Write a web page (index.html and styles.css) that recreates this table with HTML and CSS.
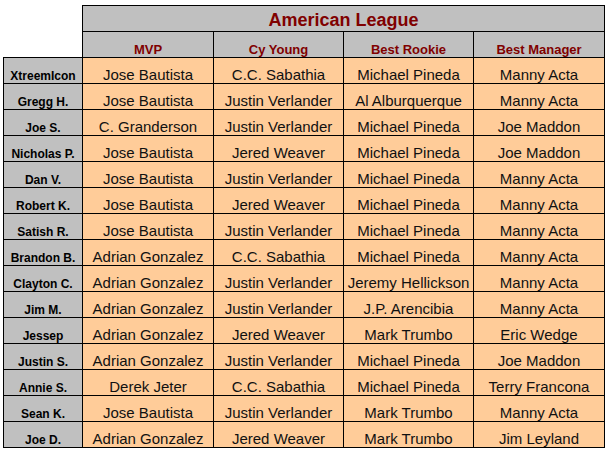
FILE: index.html
```html
<!DOCTYPE html>
<html>
<head>
<meta charset="utf-8">
<link rel="stylesheet" href="styles.css">
</head>
<body>
<table class="grid">
  <colgroup>
    <col class="c-name">
    <col class="c-mvp">
    <col class="c-cy">
    <col class="c-rookie">
    <col class="c-mgr">
  </colgroup>
  <thead>
    <tr class="row">
      <th class="corner" rowspan="2"></th>
      <th class="title" colspan="4">American League</th>
    </tr>
    <tr class="row">
      <th class="head">MVP</th>
      <th class="head">Cy Young</th>
      <th class="head">Best Rookie</th>
      <th class="head">Best Manager</th>
    </tr>
  </thead>
  <tbody>
    <tr class="row"><th class="name">XtreemIcon</th><td>Jose Bautista</td><td>C.C. Sabathia</td><td>Michael Pineda</td><td>Manny Acta</td></tr>
    <tr class="row"><th class="name">Gregg H.</th><td>Jose Bautista</td><td>Justin Verlander</td><td>Al Alburquerque</td><td>Manny Acta</td></tr>
    <tr class="row"><th class="name">Joe S.</th><td>C. Granderson</td><td>Justin Verlander</td><td>Michael Pineda</td><td>Joe Maddon</td></tr>
    <tr class="row"><th class="name">Nicholas P.</th><td>Jose Bautista</td><td>Jered Weaver</td><td>Michael Pineda</td><td>Joe Maddon</td></tr>
    <tr class="row"><th class="name">Dan V.</th><td>Jose Bautista</td><td>Justin Verlander</td><td>Michael Pineda</td><td>Manny Acta</td></tr>
    <tr class="row"><th class="name">Robert K.</th><td>Jose Bautista</td><td>Jered Weaver</td><td>Michael Pineda</td><td>Manny Acta</td></tr>
    <tr class="row"><th class="name">Satish R.</th><td>Jose Bautista</td><td>Justin Verlander</td><td>Michael Pineda</td><td>Manny Acta</td></tr>
    <tr class="row"><th class="name">Brandon B.</th><td>Adrian Gonzalez</td><td>C.C. Sabathia</td><td>Michael Pineda</td><td>Manny Acta</td></tr>
    <tr class="row"><th class="name">Clayton C.</th><td>Adrian Gonzalez</td><td>Justin Verlander</td><td>Jeremy Hellickson</td><td>Manny Acta</td></tr>
    <tr class="row"><th class="name">Jim M.</th><td>Adrian Gonzalez</td><td>Justin Verlander</td><td>J.P. Arencibia</td><td>Manny Acta</td></tr>
    <tr class="row"><th class="name">Jessep</th><td>Adrian Gonzalez</td><td>Jered Weaver</td><td>Mark Trumbo</td><td>Eric Wedge</td></tr>
    <tr class="row"><th class="name">Justin S.</th><td>Adrian Gonzalez</td><td>Justin Verlander</td><td>Michael Pineda</td><td>Joe Maddon</td></tr>
    <tr class="row"><th class="name">Annie S.</th><td>Derek Jeter</td><td>C.C. Sabathia</td><td>Michael Pineda</td><td>Terry Francona</td></tr>
    <tr class="row"><th class="name">Sean K.</th><td>Jose Bautista</td><td>Justin Verlander</td><td>Mark Trumbo</td><td>Manny Acta</td></tr>
    <tr class="row"><th class="name">Joe D.</th><td>Adrian Gonzalez</td><td>Jered Weaver</td><td>Mark Trumbo</td><td>Jim Leyland</td></tr>
  </tbody>
</table>
</body>
</html>
```

FILE: styles.css
```css
html, body {
  margin: 0;
  padding: 0;
  background: #ffffff;
}

body {
  padding: 5px 0 0 3px;
  font-family: "Liberation Sans", Arial, sans-serif;
}

.grid {
  border-collapse: collapse;
  table-layout: fixed;
  width: 602px;
}

.c-name { width: 79px; }
.c-mvp { width: 131px; }
.c-cy { width: 130px; }
.c-rookie { width: 130px; }
.c-mgr { width: 131px; }

.row {
  height: 26px;
}

.grid th,
.grid td {
  border: 1px solid #000;
  padding: 0;
  text-align: center;
  vertical-align: bottom;
  white-space: nowrap;
  overflow: hidden;
}

.grid .corner {
  background: #ffffff;
  border-top: none;
  border-left: none;
}

.title {
  background: #c0c0c0;
  color: #800000;
  font-size: 18px;
  font-weight: bold;
  padding-bottom: 1px;
}

.head {
  background: #c0c0c0;
  color: #800000;
  font-size: 13px;
  font-weight: bold;
}

.name {
  background: #c0c0c0;
  color: #000;
  font-size: 12px;
  font-weight: bold;
}

.grid td {
  background: #ffcc99;
  color: #111;
  font-size: 15px;
  font-weight: normal;
}
```
